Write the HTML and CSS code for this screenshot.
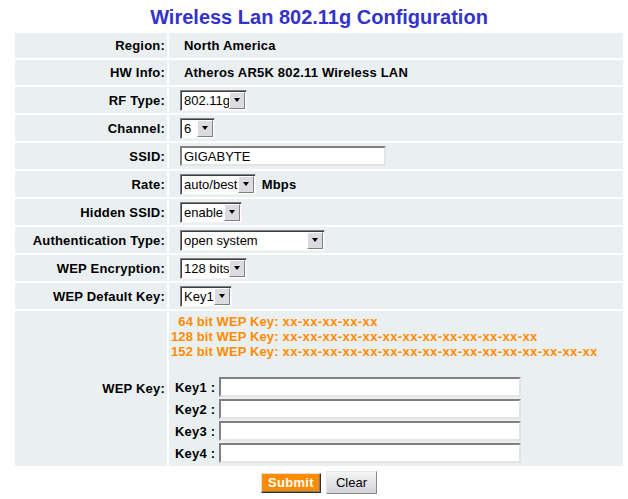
FILE: index.html
```html
<!DOCTYPE html>
<html lang="en">
<head>
    <meta charset="UTF-8">
    <title>Wireless Lan 802.11g Configuration</title>
    <link rel="stylesheet" href="styles.css">
</head>
<body>

    <div class="page">
        <h1 class="title">Wireless Lan 802.11g Configuration</h1>

        <form class="config" onsubmit="return false;">
            <table class="cfg">
                <tr class="text-row">
                    <th>Region:</th>
                    <td class="val">North America</td>
                </tr>
                <tr class="text-row">
                    <th>HW Info:</th>
                    <td class="val">Atheros AR5K 802.11 Wireless LAN</td>
                </tr>
                <tr>
                    <th>RF Type:</th>
                    <td>
                        <span class="dropdown dd-rf"><select><option>802.11g</option><option>802.11b</option></select><span class="arrow"></span></span>
                    </td>
                </tr>
                <tr>
                    <th>Channel:</th>
                    <td>
                        <span class="dropdown dd-channel"><select><option>6</option><option>1</option><option>11</option></select><span class="arrow"></span></span>
                    </td>
                </tr>
                <tr>
                    <th>SSID:</th>
                    <td><input type="text" class="txt txt-ssid" value="GIGABYTE"></td>
                </tr>
                <tr>
                    <th>Rate:</th>
                    <td>
                        <span class="dropdown dd-rate"><select><option>auto/best</option></select><span class="arrow"></span></span>
                        <span class="unit">Mbps</span>
                    </td>
                </tr>
                <tr>
                    <th>Hidden SSID:</th>
                    <td>
                        <span class="dropdown dd-hidden"><select><option>enable</option><option>disable</option></select><span class="arrow"></span></span>
                    </td>
                </tr>
                <tr>
                    <th>Authentication Type:</th>
                    <td>
                        <span class="dropdown dd-auth"><select><option>open system</option><option>shared key</option></select><span class="arrow"></span></span>
                    </td>
                </tr>
                <tr>
                    <th>WEP Encryption:</th>
                    <td>
                        <span class="dropdown dd-enc"><select><option>128 bits</option><option>64 bits</option></select><span class="arrow"></span></span>
                    </td>
                </tr>
                <tr>
                    <th>WEP Default Key:</th>
                    <td>
                        <span class="dropdown dd-key"><select><option>Key1</option><option>Key2</option></select><span class="arrow"></span></span>
                    </td>
                </tr>
                <tr class="wep-row">
                    <th>WEP Key:</th>
                    <td>
                        <!-- key format hints -->
                        <div class="hints">
                            <span>64 bit WEP Key:</span><span>xx-xx-xx-xx-xx</span>
                            <span>128 bit WEP Key:</span><span>xx-xx-xx-xx-xx-xx-xx-xx-xx-xx-xx-xx-xx</span>
                            <span>152 bit WEP Key:</span><span>xx-xx-xx-xx-xx-xx-xx-xx-xx-xx-xx-xx-xx-xx-xx-xx</span>
                        </div>
                        <div class="keys">
                            <label>Key1 :</label><input type="text" class="txt txt-key">
                            <label>Key2 :</label><input type="text" class="txt txt-key">
                            <label>Key3 :</label><input type="text" class="txt txt-key">
                            <label>Key4 :</label><input type="text" class="txt txt-key">
                        </div>
                    </td>
                </tr>
            </table>

            <div class="actions">
                <button type="submit" class="btn-submit">Submit</button>
                <button type="reset" class="btn-clear">Clear</button>
            </div>
        </form>
    </div>

</body>
</html>
```

FILE: styles.css
```css
* {
    box-sizing: border-box;
}
body {
    margin: 0;
    background: #fff;
    color: #000;
    font-family: "Liberation Sans", Arial, sans-serif;
    font-size: 13px;
}
.page {
    width: 612px;
    margin-left: 13px;
}
.title {
    margin: 5px 0 2px;
    font-size: 20px;
    line-height: 24px;
    font-weight: bold;
    text-align: center;
    color: #3333cc;
}
.config {
    margin: 0;
}
.cfg {
    width: 612px;
    border-spacing: 2px;
    border-collapse: separate;
}
.cfg th,
.cfg td {
    background: #eaeff2;
    height: 26px;
    padding: 0;
    font-size: 13px;
    line-height: 15px;
}
.cfg th {
    width: 152px;
    padding-right: 2px;
    text-align: right;
    font-weight: bold;
    letter-spacing: 0.2px;
}
.cfg td {
    padding-left: 11px;
    text-align: left;
}
.cfg .text-row th,
.cfg .text-row td {
    height: 25px;
}
.cfg td.val {
    padding-left: 15px;
    font-weight: bold;
    letter-spacing: 0.2px;
}

/* fake windows dropdown */
.dropdown {
    display: inline-flex;
    vertical-align: middle;
    height: 21px;
    background: #fff;
    border: 1px solid;
    border-color: #7f7f7f #f4f4f4 #f4f4f4 #7f7f7f;
    box-shadow: inset 1px 1px #404040;
}
.dropdown select {
    flex: 1;
    min-width: 0;
    -webkit-appearance: none;
    appearance: none;
    border: none;
    background: transparent;
    font-family: "Liberation Sans", Arial, sans-serif;
    font-size: 13px;
    color: #000;
    padding: 0 0 0 2px;
    margin: 1px 0 0 1px;
    outline: none;
}
.dropdown .arrow {
    width: 16px;
    margin: 1px 1px 1px 0;
    background: #dcdbdf;
    border: 1px solid;
    border-color: #fff #808080 #808080 #fff;
    display: flex;
    align-items: center;
    justify-content: center;
}
.dropdown .arrow::before {
    content: "";
    border-style: solid;
    border-width: 4px 3.5px 0;
    border-color: #000 transparent transparent;
}
.dd-rf { width: 67px; }
.dd-channel { width: 35px; }
.dd-rate { width: 76px; }
.dd-hidden { width: 62px; }
.dd-auth { width: 145px; }
.dd-enc { width: 67px; }
.dd-key { width: 52px; }

.unit {
    margin-left: 2px;
    font-weight: bold;
    letter-spacing: 0.2px;
    vertical-align: middle;
}

.txt {
    height: 20px;
    padding: 0 2px;
    border: 2px solid;
    border-color: #808080 #e4e4e4 #e4e4e4 #808080;
    background: #fff;
    font-family: "Liberation Sans", Arial, sans-serif;
    font-size: 13px;
    color: #000;
    vertical-align: middle;
    outline: none;
}
.txt-ssid {
    width: 206px;
}
.txt-key {
    width: 302px;
}

/* WEP KEY */
.cfg .wep-row td {
    padding: 3px 0 3px 0;
}
.hints {
    display: grid;
    grid-template-columns: auto auto;
    justify-content: start;
    column-gap: 4px;
    padding-left: 2px;
    margin-bottom: 18px;
    color: #ff8c00;
    font-weight: bold;
    letter-spacing: 0.4px;
    line-height: 15px;
}
.hints span:nth-child(odd) {
    text-align: right;
    letter-spacing: 0.1px;
}
.keys {
    display: grid;
    grid-template-columns: auto 302px;
    justify-content: start;
    align-items: center;
    column-gap: 4px;
    row-gap: 2px;
    padding-left: 6px;
}
.keys label {
    font-weight: bold;
    letter-spacing: 0.2px;
}

.actions {
    display: flex;
    justify-content: center;
    align-items: center;
    gap: 5px;
    margin-top: 3px;
}
.btn-submit {
    width: 60px;
    height: 20px;
    padding: 0;
    background: #ff8c00;
    color: #fff;
    font-family: "Liberation Sans", Arial, sans-serif;
    font-size: 13px;
    font-weight: bold;
    letter-spacing: 0.3px;
    border: 1px solid;
    border-color: #e0e0e0 #303030 #303030 #e0e0e0;
    box-shadow: inset -1px -1px #7a7a7a;
    cursor: pointer;
}
.btn-clear {
    width: 51px;
    height: 23px;
    padding: 0;
    background: linear-gradient(#f6f6f6, #d2d2da);
    color: #000;
    font-family: "Liberation Sans", Arial, sans-serif;
    font-size: 13px;
    border: 1px solid;
    border-color: #e8e8e8 #8a8a8a #8a8a8a #e8e8e8;
    cursor: pointer;
}
```
